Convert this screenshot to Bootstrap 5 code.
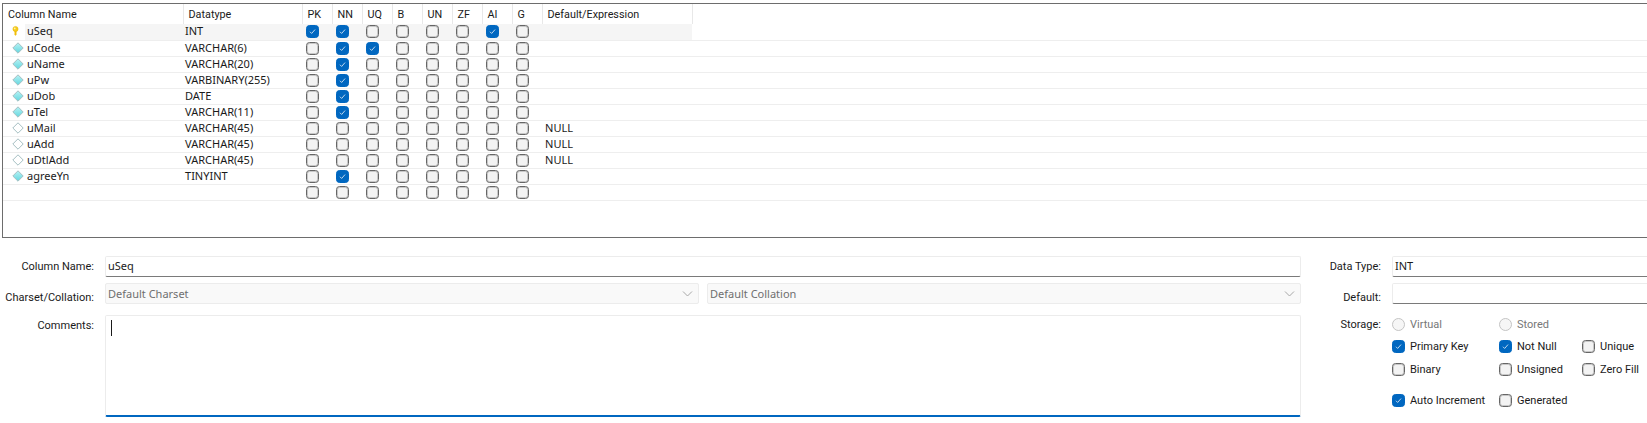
<!DOCTYPE html>
<html lang="en"><head><meta charset="utf-8"><title>Table editor</title>
<link rel="stylesheet" href="https://cdn.jsdelivr.net/npm/bootstrap@5.3.0/dist/css/bootstrap.min.css">
<style>
html,body{height:423px;overflow:hidden;background:#fff}
body{font-family:Roboto,"Liberation Sans",sans-serif;font-size:11px;color:#1a1a1a;padding:3px 0 0 2px;line-height:1}
.grid-frame{height:235px;margin-right:-4px;border:1px solid #6d6d6d;border-right:0;overflow:hidden}
.col-tbl.table{table-layout:fixed;width:1649px;margin:0;--bs-table-bg:transparent;color:#1a1a1a}
.col-tbl.table>*>tr>*{padding:0;border:0;height:16px;vertical-align:middle;font-weight:400;font-family:"Noto Sans","Liberation Sans",sans-serif;font-size:11px;line-height:14px;box-shadow:none;white-space:nowrap;overflow:hidden}
.col-tbl.table>thead>tr>th{height:20px;font-family:Roboto,"Liberation Sans",sans-serif;font-size:10.8px;border-right:1px solid #e8e8e8;padding-left:5px;padding-top:1px}
.col-tbl.table>thead>tr>th:last-child{border-right:0}
.col-tbl.table>tbody>tr>td{border-bottom:1px solid #eeeeee;padding-left:2px;padding-bottom:1px}
.col-tbl.table>tbody>tr>td.ic{padding:0 0 0 9px}
.col-tbl.table>tbody>tr>td.ck{padding:0 0 0 4px}
.col-tbl.table>tbody>tr>td.dflt{padding-left:3px}
.col-tbl.table>tbody>tr.sel>td:not(.ic):not(.rest){background:#f5f5f5}
.w-ic{width:22px}.w-name{width:158px}.w-type{width:119px}.w-ck{width:30px}.w-def{width:150px}
.form-check-input.wb{width:13px;height:13px;margin:0;display:block;float:none;background-color:#f3f3f3;border:1px solid #666;border-radius:3.5px;flex:none;box-shadow:inset 0 0 0 1px rgba(102,102,102,.3);opacity:1}
.form-check-input.wb:checked{background-color:#0067c0;border-color:#0067c0;box-shadow:none;background-size:11px;background-image:url("data:image/svg+xml,<svg xmlns='http://www.w3.org/2000/svg' viewBox='0 0 13 13'><path fill='none' stroke='%23dfeaf6' stroke-width='1' d='M3.5 6.8l2 2 4-4.6'/></svg>")}
.form-check-input.wb[type=radio]{border-radius:50%;background-color:#f6f6f6;border-color:#c4c4c4;box-shadow:none;opacity:1}
.row-icon{display:block}
.edit-form{padding-top:18px;margin-left:-2px;height:185px}
.lbl{width:94px;text-align:right;flex:none;margin-right:11px;color:#1a1a1a}
.lbl-r{text-align:right;margin-right:11px;height:21px}
.pt-a{padding-top:5px}.pt-b{padding-top:9px}.pt-c{padding-top:4px}.pt-d{padding-top:5px}
.left-pane{width:1301px;flex:none}
.right-pane{flex:1 1 auto;min-width:0}
.rlabels{width:91px;flex:none}
.rfields{flex:1 1 auto;margin-right:-20px}
.form-control.wf,.form-select.wf{height:21px;padding:0 0 2px 2px;font-size:11px;font-family:"Noto Sans","Liberation Sans",sans-serif;line-height:17px;border:1px solid #ececec;border-bottom:1px solid #7a7a7a;border-radius:2px;background-color:#fff;color:#1a1a1a;box-shadow:none;min-height:0}
.form-select.wf{background-color:#f9f9f9;border-color:#ececec;color:#6f6f6f;opacity:1;padding:0 0 0 2px;font-size:11px;background-size:11px;background-position:right 5px center;background-image:url("data:image/svg+xml,<svg xmlns='http://www.w3.org/2000/svg' viewBox='0 0 11 11'><path fill='none' stroke='%23a8a8a8' d='M1 3.5l4.5 4.5L10 3.5'/></svg>")}
.form-control.wta{height:102px;border:1px solid #ececec;border-bottom:2px solid #0067c0;border-radius:2px;box-shadow:none;resize:none;padding:0}
.caret{display:block;width:1px;height:16px;background:#1a1a1a;margin:4px 0 0 5px}
.gap-row{margin-bottom:6px}
.gap-row2{margin-bottom:11px}
.chk-row{display:flex;align-items:center;height:13px}
.chk-a{width:107px}.chk-b{width:83px}
.chk{display:flex;align-items:center;flex:none}
.chk>span{margin-left:5px;white-space:nowrap}
.chk.off>span{color:#777}
.stor{padding-top:3px}
.stor .chk-row{margin-bottom:9px}
.stor .chk-row.r1{margin-bottom:10px}
.stor .chk-row.r2{margin-bottom:18px}
</style></head><body>
<svg width="0" height="0" class="position-absolute" aria-hidden="true"><defs><linearGradient id="dia" x1="0" y1="0" x2="0" y2="1"><stop offset="0" stop-color="#b9f3f5"/><stop offset="1" stop-color="#63d6de"/></linearGradient></defs></svg>
<div class="grid-frame">
<table class="table col-tbl">
<colgroup><col class="w-ic"><col class="w-name"><col class="w-type"><col class="w-ck"><col class="w-ck"><col class="w-ck"><col class="w-ck"><col class="w-ck"><col class="w-ck"><col class="w-ck"><col class="w-ck"><col class="w-def"><col></colgroup>
<thead><tr><th colspan="2">Column Name</th><th>Datatype</th><th>PK</th><th>NN</th><th>UQ</th><th>B</th><th>UN</th><th>ZF</th><th>AI</th><th>G</th><th>Default/Expression</th><th></th></tr></thead>
<tbody>
<tr class="sel"><td class="ic"><svg class="row-icon" width="12" height="13" viewBox="0 0 12 13"><circle cx="3.5" cy="4" r="2.6" fill="#f6cb1c" stroke="#e4b400" stroke-width=".5"/><path d="M2.5 6h2v3.8l-1 1-1-1z" fill="#efbd0a"/><circle cx="2.7" cy="3.4" r=".9" fill="#fff4b0"/></svg></td><td>uSeq</td><td>INT</td><td class="ck"><input class="form-check-input wb" type="checkbox" checked aria-label="PK"></td><td class="ck"><input class="form-check-input wb" type="checkbox" checked aria-label="NN"></td><td class="ck"><input class="form-check-input wb" type="checkbox" aria-label="UQ"></td><td class="ck"><input class="form-check-input wb" type="checkbox" aria-label="B"></td><td class="ck"><input class="form-check-input wb" type="checkbox" aria-label="UN"></td><td class="ck"><input class="form-check-input wb" type="checkbox" aria-label="ZF"></td><td class="ck"><input class="form-check-input wb" type="checkbox" checked aria-label="AI"></td><td class="ck"><input class="form-check-input wb" type="checkbox" aria-label="G"></td><td class="dflt"></td><td class="rest"></td></tr>
<tr><td class="ic"><svg class="row-icon" width="12" height="12" viewBox="0 0 12 12"><path d="M6 .8 11.2 6 6 11.2.8 6z" fill="url(#dia)" stroke="#a5bfc2"/></svg></td><td>uCode</td><td>VARCHAR(6)</td><td class="ck"><input class="form-check-input wb" type="checkbox" aria-label="PK"></td><td class="ck"><input class="form-check-input wb" type="checkbox" checked aria-label="NN"></td><td class="ck"><input class="form-check-input wb" type="checkbox" checked aria-label="UQ"></td><td class="ck"><input class="form-check-input wb" type="checkbox" aria-label="B"></td><td class="ck"><input class="form-check-input wb" type="checkbox" aria-label="UN"></td><td class="ck"><input class="form-check-input wb" type="checkbox" aria-label="ZF"></td><td class="ck"><input class="form-check-input wb" type="checkbox" aria-label="AI"></td><td class="ck"><input class="form-check-input wb" type="checkbox" aria-label="G"></td><td class="dflt"></td><td></td></tr>
<tr><td class="ic"><svg class="row-icon" width="12" height="12" viewBox="0 0 12 12"><path d="M6 .8 11.2 6 6 11.2.8 6z" fill="url(#dia)" stroke="#a5bfc2"/></svg></td><td>uName</td><td>VARCHAR(20)</td><td class="ck"><input class="form-check-input wb" type="checkbox" aria-label="PK"></td><td class="ck"><input class="form-check-input wb" type="checkbox" checked aria-label="NN"></td><td class="ck"><input class="form-check-input wb" type="checkbox" aria-label="UQ"></td><td class="ck"><input class="form-check-input wb" type="checkbox" aria-label="B"></td><td class="ck"><input class="form-check-input wb" type="checkbox" aria-label="UN"></td><td class="ck"><input class="form-check-input wb" type="checkbox" aria-label="ZF"></td><td class="ck"><input class="form-check-input wb" type="checkbox" aria-label="AI"></td><td class="ck"><input class="form-check-input wb" type="checkbox" aria-label="G"></td><td class="dflt"></td><td></td></tr>
<tr><td class="ic"><svg class="row-icon" width="12" height="12" viewBox="0 0 12 12"><path d="M6 .8 11.2 6 6 11.2.8 6z" fill="url(#dia)" stroke="#a5bfc2"/></svg></td><td>uPw</td><td>VARBINARY(255)</td><td class="ck"><input class="form-check-input wb" type="checkbox" aria-label="PK"></td><td class="ck"><input class="form-check-input wb" type="checkbox" checked aria-label="NN"></td><td class="ck"><input class="form-check-input wb" type="checkbox" aria-label="UQ"></td><td class="ck"><input class="form-check-input wb" type="checkbox" aria-label="B"></td><td class="ck"><input class="form-check-input wb" type="checkbox" aria-label="UN"></td><td class="ck"><input class="form-check-input wb" type="checkbox" aria-label="ZF"></td><td class="ck"><input class="form-check-input wb" type="checkbox" aria-label="AI"></td><td class="ck"><input class="form-check-input wb" type="checkbox" aria-label="G"></td><td class="dflt"></td><td></td></tr>
<tr><td class="ic"><svg class="row-icon" width="12" height="12" viewBox="0 0 12 12"><path d="M6 .8 11.2 6 6 11.2.8 6z" fill="url(#dia)" stroke="#a5bfc2"/></svg></td><td>uDob</td><td>DATE</td><td class="ck"><input class="form-check-input wb" type="checkbox" aria-label="PK"></td><td class="ck"><input class="form-check-input wb" type="checkbox" checked aria-label="NN"></td><td class="ck"><input class="form-check-input wb" type="checkbox" aria-label="UQ"></td><td class="ck"><input class="form-check-input wb" type="checkbox" aria-label="B"></td><td class="ck"><input class="form-check-input wb" type="checkbox" aria-label="UN"></td><td class="ck"><input class="form-check-input wb" type="checkbox" aria-label="ZF"></td><td class="ck"><input class="form-check-input wb" type="checkbox" aria-label="AI"></td><td class="ck"><input class="form-check-input wb" type="checkbox" aria-label="G"></td><td class="dflt"></td><td></td></tr>
<tr><td class="ic"><svg class="row-icon" width="12" height="12" viewBox="0 0 12 12"><path d="M6 .8 11.2 6 6 11.2.8 6z" fill="url(#dia)" stroke="#a5bfc2"/></svg></td><td>uTel</td><td>VARCHAR(11)</td><td class="ck"><input class="form-check-input wb" type="checkbox" aria-label="PK"></td><td class="ck"><input class="form-check-input wb" type="checkbox" checked aria-label="NN"></td><td class="ck"><input class="form-check-input wb" type="checkbox" aria-label="UQ"></td><td class="ck"><input class="form-check-input wb" type="checkbox" aria-label="B"></td><td class="ck"><input class="form-check-input wb" type="checkbox" aria-label="UN"></td><td class="ck"><input class="form-check-input wb" type="checkbox" aria-label="ZF"></td><td class="ck"><input class="form-check-input wb" type="checkbox" aria-label="AI"></td><td class="ck"><input class="form-check-input wb" type="checkbox" aria-label="G"></td><td class="dflt"></td><td></td></tr>
<tr><td class="ic"><svg class="row-icon" width="12" height="12" viewBox="0 0 12 12"><path d="M6 .8 11.2 6 6 11.2.8 6z" fill="#fff" stroke="#a5bfc2"/></svg></td><td>uMail</td><td>VARCHAR(45)</td><td class="ck"><input class="form-check-input wb" type="checkbox" aria-label="PK"></td><td class="ck"><input class="form-check-input wb" type="checkbox" aria-label="NN"></td><td class="ck"><input class="form-check-input wb" type="checkbox" aria-label="UQ"></td><td class="ck"><input class="form-check-input wb" type="checkbox" aria-label="B"></td><td class="ck"><input class="form-check-input wb" type="checkbox" aria-label="UN"></td><td class="ck"><input class="form-check-input wb" type="checkbox" aria-label="ZF"></td><td class="ck"><input class="form-check-input wb" type="checkbox" aria-label="AI"></td><td class="ck"><input class="form-check-input wb" type="checkbox" aria-label="G"></td><td class="dflt">NULL</td><td></td></tr>
<tr><td class="ic"><svg class="row-icon" width="12" height="12" viewBox="0 0 12 12"><path d="M6 .8 11.2 6 6 11.2.8 6z" fill="#fff" stroke="#a5bfc2"/></svg></td><td>uAdd</td><td>VARCHAR(45)</td><td class="ck"><input class="form-check-input wb" type="checkbox" aria-label="PK"></td><td class="ck"><input class="form-check-input wb" type="checkbox" aria-label="NN"></td><td class="ck"><input class="form-check-input wb" type="checkbox" aria-label="UQ"></td><td class="ck"><input class="form-check-input wb" type="checkbox" aria-label="B"></td><td class="ck"><input class="form-check-input wb" type="checkbox" aria-label="UN"></td><td class="ck"><input class="form-check-input wb" type="checkbox" aria-label="ZF"></td><td class="ck"><input class="form-check-input wb" type="checkbox" aria-label="AI"></td><td class="ck"><input class="form-check-input wb" type="checkbox" aria-label="G"></td><td class="dflt">NULL</td><td></td></tr>
<tr><td class="ic"><svg class="row-icon" width="12" height="12" viewBox="0 0 12 12"><path d="M6 .8 11.2 6 6 11.2.8 6z" fill="#fff" stroke="#a5bfc2"/></svg></td><td>uDtlAdd</td><td>VARCHAR(45)</td><td class="ck"><input class="form-check-input wb" type="checkbox" aria-label="PK"></td><td class="ck"><input class="form-check-input wb" type="checkbox" aria-label="NN"></td><td class="ck"><input class="form-check-input wb" type="checkbox" aria-label="UQ"></td><td class="ck"><input class="form-check-input wb" type="checkbox" aria-label="B"></td><td class="ck"><input class="form-check-input wb" type="checkbox" aria-label="UN"></td><td class="ck"><input class="form-check-input wb" type="checkbox" aria-label="ZF"></td><td class="ck"><input class="form-check-input wb" type="checkbox" aria-label="AI"></td><td class="ck"><input class="form-check-input wb" type="checkbox" aria-label="G"></td><td class="dflt">NULL</td><td></td></tr>
<tr><td class="ic"><svg class="row-icon" width="12" height="12" viewBox="0 0 12 12"><path d="M6 .8 11.2 6 6 11.2.8 6z" fill="url(#dia)" stroke="#a5bfc2"/></svg></td><td>agreeYn</td><td>TINYINT</td><td class="ck"><input class="form-check-input wb" type="checkbox" aria-label="PK"></td><td class="ck"><input class="form-check-input wb" type="checkbox" checked aria-label="NN"></td><td class="ck"><input class="form-check-input wb" type="checkbox" aria-label="UQ"></td><td class="ck"><input class="form-check-input wb" type="checkbox" aria-label="B"></td><td class="ck"><input class="form-check-input wb" type="checkbox" aria-label="UN"></td><td class="ck"><input class="form-check-input wb" type="checkbox" aria-label="ZF"></td><td class="ck"><input class="form-check-input wb" type="checkbox" aria-label="AI"></td><td class="ck"><input class="form-check-input wb" type="checkbox" aria-label="G"></td><td class="dflt"></td><td></td></tr>
<tr><td class="ic"></td><td></td><td></td><td class="ck"><input class="form-check-input wb" type="checkbox" aria-label="PK"></td><td class="ck"><input class="form-check-input wb" type="checkbox" aria-label="NN"></td><td class="ck"><input class="form-check-input wb" type="checkbox" aria-label="UQ"></td><td class="ck"><input class="form-check-input wb" type="checkbox" aria-label="B"></td><td class="ck"><input class="form-check-input wb" type="checkbox" aria-label="UN"></td><td class="ck"><input class="form-check-input wb" type="checkbox" aria-label="ZF"></td><td class="ck"><input class="form-check-input wb" type="checkbox" aria-label="AI"></td><td class="ck"><input class="form-check-input wb" type="checkbox" aria-label="G"></td><td class="dflt"></td><td></td></tr>
</tbody></table>
</div>
<div class="edit-form d-flex">
  <div class="left-pane">
    <div class="d-flex gap-row"><label class="lbl pt-a">Column Name:</label><input class="form-control wf flex-grow-1" value="uSeq" aria-label="Column Name"></div>
    <div class="d-flex gap-row2"><label class="lbl pt-b">Charset/Collation:</label>
      <div class="d-flex flex-grow-1 gap-2"><select class="form-select wf" disabled aria-label="Charset"><option>Default Charset</option></select><select class="form-select wf" disabled aria-label="Collation"><option>Default Collation</option></select></div></div>
    <div class="d-flex"><label class="lbl pt-d">Comments:</label><div class="form-control wta flex-grow-1"><span class="caret"></span></div></div>
  </div>
  <div class="right-pane d-flex">
    <div class="rlabels">
      <div class="lbl-r gap-row pt-a">Data Type:</div>
      <div class="lbl-r gap-row2 pt-b">Default:</div>
      <div class="lbl-r pt-c">Storage:</div>
    </div>
    <div class="rfields">
      <input class="form-control wf gap-row" value="INT" aria-label="Data Type">
      <input class="form-control wf gap-row2" aria-label="Default">
      <div class="stor">
        <div class="chk-row"><label class="chk off chk-a"><input class="form-check-input wb" type="radio" disabled name="st"><span>Virtual</span></label><label class="chk off"><input class="form-check-input wb" type="radio" disabled name="st"><span>Stored</span></label></div>
        <div class="chk-row r1"><label class="chk chk-a"><input class="form-check-input wb" type="checkbox" checked><span>Primary Key</span></label><label class="chk chk-b"><input class="form-check-input wb" type="checkbox" checked><span>Not Null</span></label><label class="chk"><input class="form-check-input wb" type="checkbox"><span>Unique</span></label></div>
        <div class="chk-row r2"><label class="chk chk-a"><input class="form-check-input wb" type="checkbox"><span>Binary</span></label><label class="chk chk-b"><input class="form-check-input wb" type="checkbox"><span>Unsigned</span></label><label class="chk"><input class="form-check-input wb" type="checkbox"><span>Zero Fill</span></label></div>
        <div class="chk-row"><label class="chk chk-a"><input class="form-check-input wb" type="checkbox" checked><span>Auto Increment</span></label><label class="chk"><input class="form-check-input wb" type="checkbox"><span>Generated</span></label></div>
      </div>
    </div>
  </div>
</div>
<script src="https://cdn.jsdelivr.net/npm/bootstrap@5.3.0/dist/js/bootstrap.bundle.min.js"></script>
</body></html>
